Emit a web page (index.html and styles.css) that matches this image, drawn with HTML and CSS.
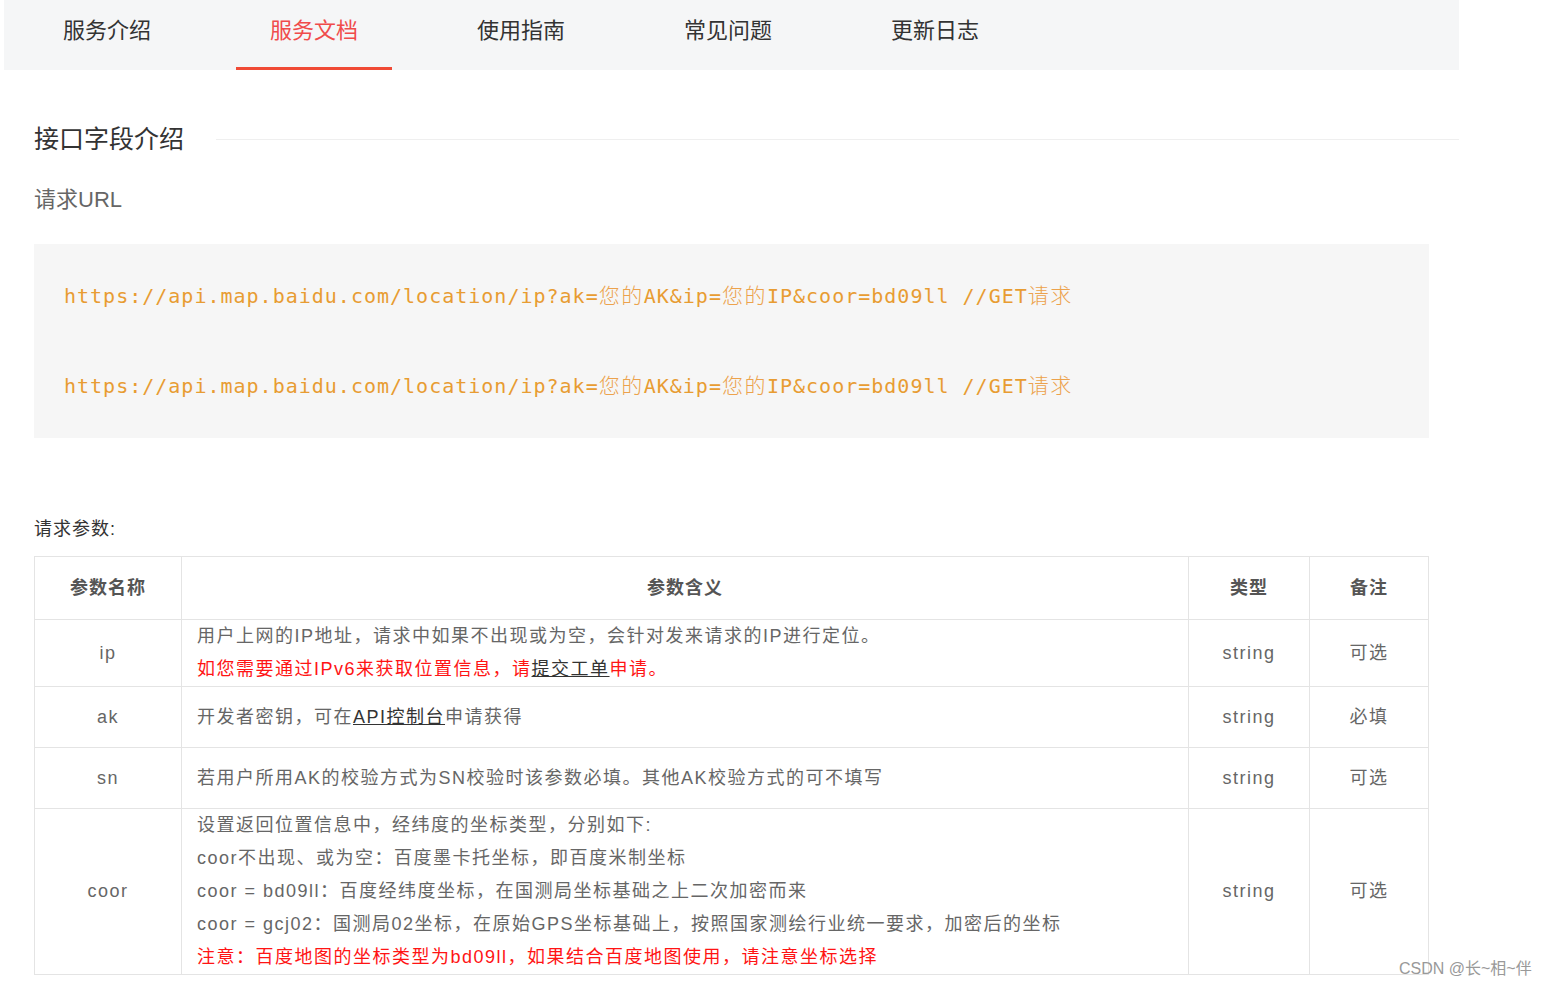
FILE: index.html
```html
<!DOCTYPE html>
<html lang="zh-CN">
<head>
<meta charset="utf-8">
<title>服务文档</title>
<link rel="stylesheet" href="styles.css">
</head>
<body>
<div class="page">
  <nav class="tabs">
    <a class="tab">服务介绍</a>
    <a class="tab active">服务文档</a>
    <a class="tab">使用指南</a>
    <a class="tab">常见问题</a>
    <a class="tab">更新日志</a>
  </nav>

  <div class="section-title">
    <h2>接口字段介绍</h2>
    <span class="rule"></span>
  </div>

  <div class="content">
    <p class="sub">请求URL</p>
    <pre class="code">https://api.map.baidu.com/location/ip?ak=<span class="cjk">您的</span>AK&amp;ip=<span class="cjk">您的</span>IP&amp;coor=bd09ll //GET<span class="cjk">请求</span>

https://api.map.baidu.com/location/ip?ak=<span class="cjk">您的</span>AK&amp;ip=<span class="cjk">您的</span>IP&amp;coor=bd09ll //GET<span class="cjk">请求</span></pre>

    <p class="label">请求参数:</p>
    <table class="params">
      <colgroup>
        <col class="c1">
        <col class="c2">
        <col class="c3">
        <col class="c4">
      </colgroup>
      <thead>
        <tr>
          <th>参数名称</th>
          <th>参数含义</th>
          <th>类型</th>
          <th>备注</th>
        </tr>
      </thead>
      <tbody>
        <tr>
          <td class="center">ip</td>
          <td>用户上网的IP地址，请求中如果不出现或为空，会针对发来请求的IP进行定位。<br><span class="red">如您需要通过IPv6来获取位置信息，请<a class="link">提交工单</a>申请。</span></td>
          <td class="center">string</td>
          <td class="center">可选</td>
        </tr>
        <tr>
          <td class="center">ak</td>
          <td>开发者密钥，可在<a class="link">API控制台</a>申请获得</td>
          <td class="center">string</td>
          <td class="center">必填</td>
        </tr>
        <tr>
          <td class="center">sn</td>
          <td>若用户所用AK的校验方式为SN校验时该参数必填。其他AK校验方式的可不填写</td>
          <td class="center">string</td>
          <td class="center">可选</td>
        </tr>
        <tr>
          <td class="center">coor</td>
          <td>设置返回位置信息中，经纬度的坐标类型，分别如下:<br>coor不出现、或为空：百度墨卡托坐标，即百度米制坐标<br>coor = bd09ll：百度经纬度坐标，在国测局坐标基础之上二次加密而来<br>coor = gcj02：国测局02坐标，在原始GPS坐标基础上，按照国家测绘行业统一要求，加密后的坐标<br><span class="red">注意：百度地图的坐标类型为bd09ll，如果结合百度地图使用，请注意坐标选择</span></td>
          <td class="center">string</td>
          <td class="center">可选</td>
        </tr>
      </tbody>
    </table>
  </div>
</div>
<div class="watermark">CSDN @长~相~伴</div>
</body>
</html>
```

FILE: styles.css
```css
html, body {
  margin: 0;
  padding: 0;
  background: #fff;
}

body {
  position: relative;
  height: 985px;
  overflow: hidden;
  font-family: "Liberation Sans", "Noto Sans CJK SC", sans-serif;
  color: #333;
}

.page {
  width: 1455px;
  margin-left: 4px;
}

.tabs {
  display: flex;
  gap: 51px;
  height: 70px;
  padding-left: 25px;
  background: #f5f6f7;
  box-sizing: border-box;
}

.tab {
  width: 156px;
  box-sizing: border-box;
  text-align: center;
  font-size: 22px;
  line-height: 62px;
  color: #333;
  border-bottom: 3px solid transparent;
  height: 70px;
}

.tab.active {
  color: #f04b4b;
  border-bottom-color: #f04a35;
}

.section-title {
  display: flex;
  align-items: center;
  margin-top: 50px;
  padding-left: 30px;
  height: 38px;
}

.section-title h2 {
  margin: 0;
  font-size: 25px;
  font-weight: normal;
  color: #333;
  line-height: 38px;
}

.rule {
  flex: 1;
  height: 1px;
  background: #efefef;
  margin-left: 32px;
}

.content {
  padding: 0 30px 0 30px;
}

.sub {
  margin: 27px 0 0;
  font-size: 22px;
  line-height: 30px;
  color: #666;
}

.code {
  margin: 29px 0 0;
  padding: 30px 30px 29px;
  background: #f6f6f6;
  font-family: "DejaVu Sans Mono", "Liberation Mono", monospace;
  font-size: 20px;
  letter-spacing: 1px;
  line-height: 45px;
  color: #e89c32;
  white-space: pre;
}

.code .cjk {
  font-family: "Noto Sans CJK SC", sans-serif;
  font-size: 21px;
  letter-spacing: 1.5px;
  line-height: 20px;
  font-weight: 300;
  color: #eca24c;
}

.label {
  margin: 77px 0 0;
  font-size: 18px;
  letter-spacing: 1px;
  line-height: 28px;
  color: #333;
}

.params {
  margin-top: 13px;
  width: 100%;
  table-layout: fixed;
  border-collapse: collapse;
  font-size: 18px;
  letter-spacing: 1.5px;
  color: #666;
}

.c1 { width: 147px; }
.c3 { width: 121px; }
.c4 { width: 119px; }

.params th,
.params td {
  border: 1px solid #e4e4e4;
  padding: 0 15px;
  line-height: 33px;
}

.params th {
  height: 62px;
  font-weight: bold;
  letter-spacing: 1px;
  color: #555;
  text-align: center;
}

.params td {
  height: 60px;
  text-align: left;
}

.params td.center {
  text-align: center;
}

.red {
  color: #ff1414;
}

.link {
  color: #333;
  text-decoration: underline;
}

.watermark {
  position: absolute;
  left: 1399px;
  top: 955px;
  font-size: 16px;
  color: #999;
  white-space: nowrap;
}
```
